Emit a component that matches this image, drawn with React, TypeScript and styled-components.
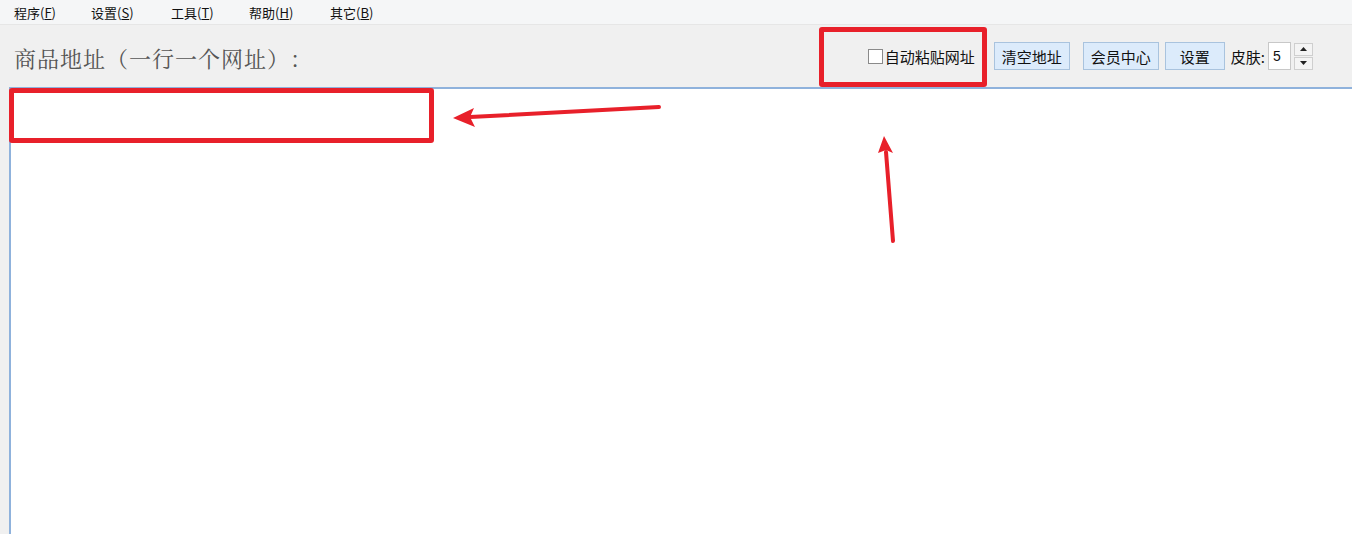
import React from 'react'
import styled, { createGlobalStyle } from 'styled-components'

const GlobalStyle = createGlobalStyle`
  html, body {
    margin: 0;
    padding: 0;
    overflow: hidden;
    background: #f0f0f0;
  }
  #root {
    height: 534px;
  }
`

const menus = [
  { label: '程序', key: 'F', w: 77 },
  { label: '设置', key: 'S', w: 80 },
  { label: '工具', key: 'T', w: 78 },
  { label: '帮助', key: 'H', w: 81 },
  { label: '其它', key: 'B', w: 78 },
]

const App = () => {
  return (
    <Container>
      <GlobalStyle />
      <MenuBar>
        {menus.map((m) => (
          <MenuItem key={m.key} $w={m.w}>
            {m.label}(<u>{m.key}</u>)
          </MenuItem>
        ))}
      </MenuBar>
      <Toolbar>
        <Title>商品地址（一行一个网址）：</Title>
        <Tools>
          <CheckLabel>
            <Check />
            自动粘贴网址
          </CheckLabel>
          <Button $w={76} $mr={13}>清空地址</Button>
          <Button $w={76} $mr={6}>会员中心</Button>
          <Button $w={60} $mr={6}>设置</Button>
          <SkinLabel>皮肤:</SkinLabel>
          <Spin>
            <SpinValue>5</SpinValue>
            <SpinBtns>
              <SpinBtn>
                <svg width="7" height="4" viewBox="0 0 7 4"><path d="M0 4 L3.5 0 L7 4Z" fill="#222" /></svg>
              </SpinBtn>
              <SpinBtn>
                <svg width="7" height="4" viewBox="0 0 7 4"><path d="M0 0 L3.5 4 L7 0Z" fill="#222" /></svg>
              </SpinBtn>
            </SpinBtns>
          </Spin>
        </Tools>
      </Toolbar>
      <Body>
        <TextArea />
      </Body>

      <Marker style={{ left: 819, top: 27, width: 168, height: 60 }} />
      <Marker style={{ left: 9, top: 88, width: 425, height: 55 }} />
      <Overlay width="1352" height="534" viewBox="0 0 1352 534">
        <line x1="659" y1="107" x2="470" y2="117" stroke="#e8202a" strokeWidth="4" strokeLinecap="round" />
        <path d="M453 118 L474 108 L470 117 L475 127 Z" fill="#e8202a" />
        <line x1="893" y1="241" x2="886" y2="152" stroke="#e8202a" strokeWidth="4" strokeLinecap="round" />
        <path d="M884 136 L893 153 L886 150 L878 153 Z" fill="#e8202a" />
      </Overlay>
    </Container>
  )
}

export default App

const Container = styled.div`
  position: relative;
  width: 1352px;
  height: 534px;
  display: flex;
  flex-direction: column;
  background: #f0f0f0;
  overflow: hidden;
`
const MenuBar = styled.div`
  height: 25px;
  display: flex;
  align-items: center;
  padding-left: 14px;
  background: #f5f6f7;
  border-bottom: 1px solid #e6e6e6;
  box-sizing: border-box;
`
const MenuItem = styled.div<{ $w: number }>`
  font-family: "Noto Sans CJK SC", sans-serif;
  font-size: 13px;
  color: #111;
  width: ${(p) => p.$w}px;
  flex: none;
  u {
    text-underline-offset: 1px;
  }
`
const Toolbar = styled.div`
  height: 62px;
  display: flex;
  align-items: center;
  justify-content: space-between;
  padding-left: 14px;
  padding-right: 39px;
`
const Title = styled.div`
  font-family: "Noto Serif CJK SC", "Liberation Serif", "Noto Sans CJK SC", serif;
  font-size: 22px;
  letter-spacing: 1px;
  color: #555;
  margin-top: 2px;
  text-spacing-trim: space-all;
  font-variant-east-asian: full-width;
`
const Tools = styled.div`
  display: flex;
  align-items: center;
`
const CheckLabel = styled.label`
  display: flex;
  align-items: center;
  font-family: "Noto Sans CJK SC", sans-serif;
  font-size: 15px;
  color: #111;
  margin-right: 19px;
`
const Check = styled.span`
  width: 13px;
  height: 13px;
  border: 1px solid #8a8a8a;
  background: #fff;
  margin-right: 2px;
`
const Button = styled.div<{ $w: number; $mr: number }>`
  width: ${(p) => p.$w}px;
  height: 28px;
  box-sizing: border-box;
  display: flex;
  align-items: center;
  justify-content: center;
  background: #dcebfb;
  border: 1px solid #a9c3de;
  font-family: "Noto Sans CJK SC", sans-serif;
  font-size: 15px;
  color: #111;
  margin-right: ${(p) => p.$mr}px;
`
const SkinLabel = styled.div`
  font-family: "Noto Sans CJK SC", sans-serif;
  font-size: 15px;
  color: #111;
  margin-right: 3px;
`
const Spin = styled.div`
  display: flex;
  align-items: center;
`
const SpinValue = styled.div`
  width: 23px;
  height: 28px;
  box-sizing: border-box;
  background: #fff;
  border: 1px solid #c8c8c8;
  font-family: "Liberation Sans", sans-serif;
  font-size: 14px;
  color: #111;
  display: flex;
  align-items: center;
  padding-left: 4px;
`
const SpinBtns = styled.div`
  display: flex;
  flex-direction: column;
  gap: 1px;
  margin-left: 3px;
`
const SpinBtn = styled.div`
  width: 19px;
  height: 13px;
  box-sizing: border-box;
  border: 1px solid #cfcfcf;
  background: #f4f4f4;
  display: flex;
  align-items: center;
  justify-content: center;
`
const Body = styled.div`
  flex: 1;
  display: flex;
  padding-left: 9px;
`
const TextArea = styled.div`
  flex: 1;
  background: #fff;
  border-top: 2px solid #8fb2dc;
  border-left: 2px solid #8fb2dc;
`
const Marker = styled.div`
  position: absolute;
  box-sizing: border-box;
  border: 5px solid #e8202a;
  border-radius: 3px;
`
const Overlay = styled.svg`
  position: absolute;
  left: 0;
  top: 0;
  pointer-events: none;
`
